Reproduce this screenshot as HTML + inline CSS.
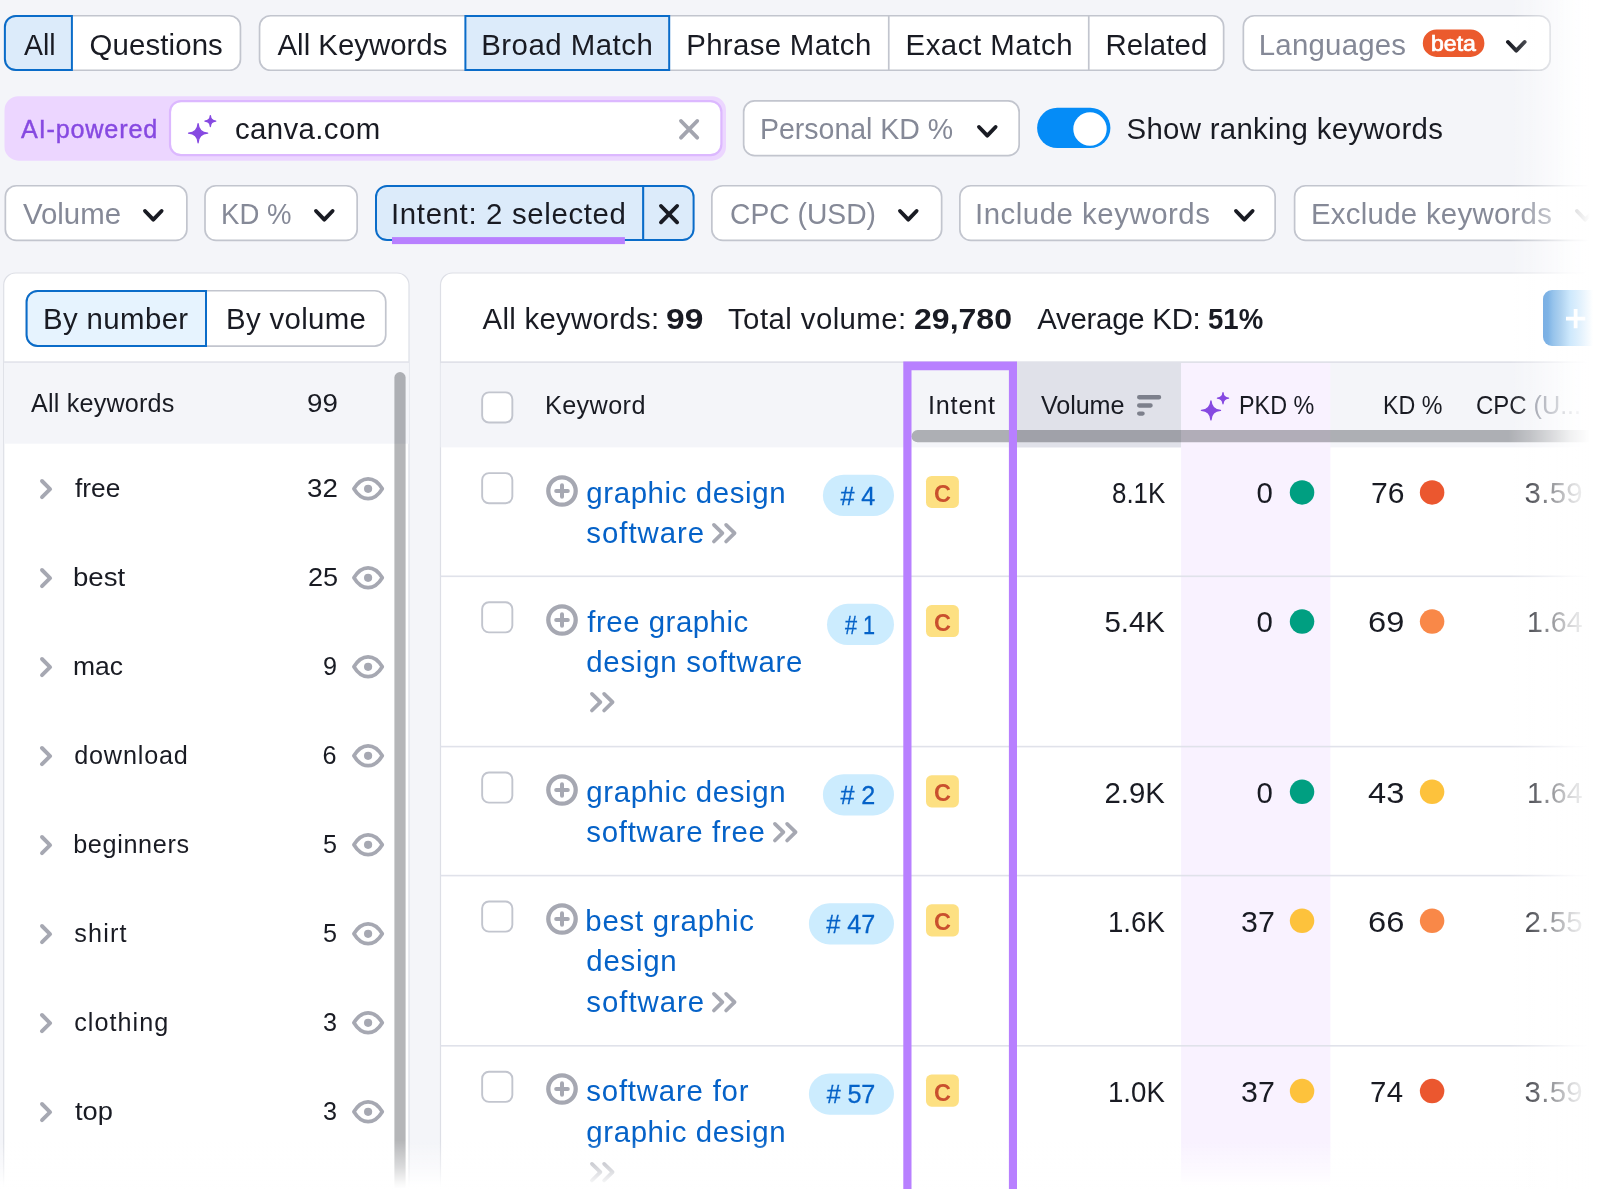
<!DOCTYPE html>
<html lang="en">
<head>
<meta charset="utf-8">
<title>Keyword Magic Tool</title>
<style>
*{box-sizing:border-box;margin:0;padding:0}
html,body{width:1600px;height:1189px;overflow:hidden;background:#f4f5f9}
body{position:relative;font-family:"Liberation Sans",sans-serif;color:#191b23}
.abs{position:absolute}
.t{position:absolute;white-space:pre;line-height:1}
svg{position:absolute;overflow:visible}
</style>
</head>
<body>

<svg style="left:0;top:0" width="1600" height="1189" viewBox="0 0 1600 1189"><path d="M15.70 273.00 H397.00 A12.00 12.00 0 0 1 409.00 285.00 V1299.40 H3.70 V285.00 A12.00 12.00 0 0 1 15.70 273.00 Z" fill="#fff" stroke="#dddfe6" stroke-width="1.2"/><path d="M452.50 273.00 H1699.40 V1299.40 H440.50 V285.00 A12.00 12.00 0 0 1 452.50 273.00 Z" fill="#fff" stroke="#dddfe6" stroke-width="1.2"/><path d="M15.75 15.75 H229.45 A11.00 11.00 0 0 1 240.45 26.75 V59.25 A11.00 11.00 0 0 1 229.45 70.25 H15.75 A11.00 11.00 0 0 1 4.75 59.25 V26.75 A11.00 11.00 0 0 1 15.75 15.75 Z" fill="#fff" stroke="#c2c5ce" stroke-width="1.7"/><path d="M15.90 15.90 H71.90 V70.10 H15.90 A11.00 11.00 0 0 1 4.90 59.10 V26.90 A11.00 11.00 0 0 1 15.90 15.90 Z" fill="#dcebfa" stroke="#0a6cc9" stroke-width="2"/><path d="M270.55 15.75 H1212.65 A11.00 11.00 0 0 1 1223.65 26.75 V59.25 A11.00 11.00 0 0 1 1212.65 70.25 H270.55 A11.00 11.00 0 0 1 259.55 59.25 V26.75 A11.00 11.00 0 0 1 270.55 15.75 Z" fill="#fff" stroke="#c2c5ce" stroke-width="1.7"/><path d="M465.40 15.90 H669.20 V70.10 H465.40 V15.90 Z" fill="#dcebfa" stroke="#0a6cc9" stroke-width="2"/><path d="M888.75 15.9 V70.1" stroke="#c2c5ce" stroke-width="1.7" fill="none"/><path d="M1088.75 15.9 V70.1" stroke="#c2c5ce" stroke-width="1.7" fill="none"/><path d="M1254.35 15.75 H1539.15 A11.00 11.00 0 0 1 1550.15 26.75 V59.25 A11.00 11.00 0 0 1 1539.15 70.25 H1254.35 A11.00 11.00 0 0 1 1243.35 59.25 V26.75 A11.00 11.00 0 0 1 1254.35 15.75 Z" fill="#fff" stroke="#c2c5ce" stroke-width="1.7"/><path d="M1436.55 29.40 H1470.65 A13.75 13.75 0 0 1 1484.40 43.15 V43.15 A13.75 13.75 0 0 1 1470.65 56.90 H1436.55 A13.75 13.75 0 0 1 1422.80 43.15 V43.15 A13.75 13.75 0 0 1 1436.55 29.40 Z" fill="#eb5a2d"/><path d="M18.50 96.20 H712.00 A14.00 14.00 0 0 1 726.00 110.20 V146.70 A14.00 14.00 0 0 1 712.00 160.70 H18.50 A14.00 14.00 0 0 1 4.50 146.70 V110.20 A14.00 14.00 0 0 1 18.50 96.20 Z" fill="#ecd6ff"/><path d="M181.00 101.10 H710.40 A11.00 11.00 0 0 1 721.40 112.10 V144.20 A11.00 11.00 0 0 1 710.40 155.20 H181.00 A11.00 11.00 0 0 1 170.00 144.20 V112.10 A11.00 11.00 0 0 1 181.00 101.10 Z" fill="#fff" stroke="#dcb8ff" stroke-width="2.2"/><path d="M754.65 100.95 H1008.15 A11.00 11.00 0 0 1 1019.15 111.95 V144.65 A11.00 11.00 0 0 1 1008.15 155.65 H754.65 A11.00 11.00 0 0 1 743.65 144.65 V111.95 A11.00 11.00 0 0 1 754.65 100.95 Z" fill="#fff" stroke="#c2c5ce" stroke-width="1.7"/><path d="M1057.27 107.75 H1090.23 A20.17 20.17 0 0 1 1110.40 127.92 V127.93 A20.17 20.17 0 0 1 1090.23 148.10 H1057.27 A20.17 20.17 0 0 1 1037.10 127.93 V127.92 A20.17 20.17 0 0 1 1057.27 107.75 Z" fill="#058cf7"/><circle cx="1090" cy="129" r="16.700" fill="#fff"/><path d="M16.35 185.75 H175.85 A11.00 11.00 0 0 1 186.85 196.75 V229.45 A11.00 11.00 0 0 1 175.85 240.45 H16.35 A11.00 11.00 0 0 1 5.35 229.45 V196.75 A11.00 11.00 0 0 1 16.35 185.75 Z" fill="#fff" stroke="#c2c5ce" stroke-width="1.7"/><path d="M216.00 185.75 H346.15 A11.00 11.00 0 0 1 357.15 196.75 V229.45 A11.00 11.00 0 0 1 346.15 240.45 H216.00 A11.00 11.00 0 0 1 205.00 229.45 V196.75 A11.00 11.00 0 0 1 216.00 185.75 Z" fill="#fff" stroke="#c2c5ce" stroke-width="1.7"/><path d="M387.00 185.90 H682.60 A11.00 11.00 0 0 1 693.60 196.90 V229.10 A11.00 11.00 0 0 1 682.60 240.10 H387.00 A11.00 11.00 0 0 1 376.00 229.10 V196.90 A11.00 11.00 0 0 1 387.00 185.90 Z" fill="#dcebfa" stroke="#0a6cc9" stroke-width="2"/><path d="M643.15 185.9 V240.3" stroke="#0a6cc9" stroke-width="2.1" fill="none"/><rect x="392" y="237.100" width="232.900" height="7" fill="#b880ff"/><path d="M722.85 185.75 H930.65 A11.00 11.00 0 0 1 941.65 196.75 V229.45 A11.00 11.00 0 0 1 930.65 240.45 H722.85 A11.00 11.00 0 0 1 711.85 229.45 V196.75 A11.00 11.00 0 0 1 722.85 185.75 Z" fill="#fff" stroke="#c2c5ce" stroke-width="1.7"/><path d="M970.85 185.75 H1264.15 A11.00 11.00 0 0 1 1275.15 196.75 V229.45 A11.00 11.00 0 0 1 1264.15 240.45 H970.85 A11.00 11.00 0 0 1 959.85 229.45 V196.75 A11.00 11.00 0 0 1 970.85 185.75 Z" fill="#fff" stroke="#c2c5ce" stroke-width="1.7"/><path d="M1305.60 185.75 H1648.15 A11.00 11.00 0 0 1 1659.15 196.75 V229.45 A11.00 11.00 0 0 1 1648.15 240.45 H1305.60 A11.00 11.00 0 0 1 1294.60 229.45 V196.75 A11.00 11.00 0 0 1 1305.60 185.75 Z" fill="#fff" stroke="#c2c5ce" stroke-width="1.7"/><rect x="4.100" y="361.300" width="404.800" height="1.600" fill="#e0e1e9"/><rect x="4.100" y="362.900" width="404.800" height="80.800" fill="#f4f5f9"/><path d="M37.45 290.75 H374.75 A11.00 11.00 0 0 1 385.75 301.75 V335.05 A11.00 11.00 0 0 1 374.75 346.05 H37.45 A11.00 11.00 0 0 1 26.45 335.05 V301.75 A11.00 11.00 0 0 1 37.45 290.75 Z" fill="#fff" stroke="#c2c5ce" stroke-width="1.7"/><path d="M37.60 290.90 H206.00 V345.90 H37.60 A11.00 11.00 0 0 1 26.60 334.90 V301.90 A11.00 11.00 0 0 1 37.60 290.90 Z" fill="#e6f3fe" stroke="#0a6cc9" stroke-width="2"/><rect x="394.400" y="372" width="11.200" height="900" rx="5.600" fill="rgba(25,27,35,0.32)"/></svg>
<svg style="left:1506.2px;top:39.6px" width="20.600" height="12.750" viewBox="0 0 20.600 12.750"><path d="M2 2 L10.300 10.600 L18.600 2" fill="none" stroke="#191b23" stroke-width="3.900" stroke-linecap="round" stroke-linejoin="round"/></svg>
<svg style="left:187.95px;top:114.7px" width="28.500" height="28.500" viewBox="0 0 28.500 28.500"><path d="M10.10 8.65 Q10.67 17.63 19.65 18.20 Q10.67 18.77 10.10 27.75 Q9.53 18.77 0.55 18.20 Q9.53 17.63 10.10 8.65 Z" fill="#8649e1" stroke="#8649e1" stroke-width="1.300" stroke-linejoin="round"/><path d="M22.35 0.60 Q22.68 5.72 27.80 6.05 Q22.68 6.38 22.35 11.50 Q22.02 6.38 16.90 6.05 Q22.02 5.72 22.35 0.60 Z" fill="#8649e1" stroke="#8649e1" stroke-width="1.300" stroke-linejoin="round"/></svg>
<svg style="left:679.400px;top:118.600px" width="20.200" height="20.600" viewBox="0 0 20.200 20.600"><path d="M2 2 L18.200 18.600 M18.200 2 L2 18.600" fill="none" stroke="#a3a5af" stroke-width="3.900" stroke-linecap="round"/></svg>
<svg style="left:976.8px;top:124.6px" width="20.600" height="12.750" viewBox="0 0 20.600 12.750"><path d="M2 2 L10.300 10.600 L18.600 2" fill="none" stroke="#191b23" stroke-width="3.900" stroke-linecap="round" stroke-linejoin="round"/></svg>
<svg style="left:143.4px;top:209.25px" width="20.600" height="12.750" viewBox="0 0 20.600 12.750"><path d="M2 2 L10.300 10.600 L18.600 2" fill="none" stroke="#191b23" stroke-width="3.900" stroke-linecap="round" stroke-linejoin="round"/></svg>
<svg style="left:313.6px;top:209.25px" width="20.600" height="12.750" viewBox="0 0 20.600 12.750"><path d="M2 2 L10.300 10.600 L18.600 2" fill="none" stroke="#191b23" stroke-width="3.900" stroke-linecap="round" stroke-linejoin="round"/></svg>
<svg style="left:659.200px;top:203.600px" width="20.100" height="20.300" viewBox="0 0 20.100 20.300"><path d="M2 2 L18.100 18.300 M18.100 2 L2 18.300" fill="none" stroke="#191b23" stroke-width="3.900" stroke-linecap="round"/></svg>
<svg style="left:897.8px;top:209.25px" width="20.600" height="12.750" viewBox="0 0 20.600 12.750"><path d="M2 2 L10.300 10.600 L18.600 2" fill="none" stroke="#191b23" stroke-width="3.900" stroke-linecap="round" stroke-linejoin="round"/></svg>
<svg style="left:1233.6px;top:209.25px" width="20.600" height="12.750" viewBox="0 0 20.600 12.750"><path d="M2 2 L10.300 10.600 L18.600 2" fill="none" stroke="#191b23" stroke-width="3.900" stroke-linecap="round" stroke-linejoin="round"/></svg>
<svg style="left:1575px;top:209.25px" width="20.600" height="12.750" viewBox="0 0 20.600 12.750"><path d="M2 2 L10.300 10.600 L18.600 2" fill="none" stroke="#191b23" stroke-width="3.900" stroke-linecap="round" stroke-linejoin="round"/></svg>
<svg style="left:40.250px;top:478.75px" width="12.200" height="20.200" viewBox="0 0 12.200 20.200"><path d="M2 2 L10.100 10.100 L2 18.200" fill="none" stroke="#a6a8b2" stroke-width="3.900" stroke-linecap="round" stroke-linejoin="round"/></svg>
<svg style="left:351.900px;top:476.9px" width="32.200" height="23.600" viewBox="0 0 32.200 23.600"><path d="M1.900 11.800 C6 5 10.500 1.900 16.100 1.900 C21.700 1.900 26.200 5 30.300 11.800 C26.200 18.600 21.700 21.700 16.100 21.700 C10.500 21.700 6 18.600 1.900 11.800 Z" fill="none" stroke="#a6a8b2" stroke-width="3.700" stroke-linejoin="round"/><circle cx="16.100" cy="11.800" r="4.100" fill="#a6a8b2"/></svg>
<svg style="left:40.250px;top:567.75px" width="12.200" height="20.200" viewBox="0 0 12.200 20.200"><path d="M2 2 L10.100 10.100 L2 18.200" fill="none" stroke="#a6a8b2" stroke-width="3.900" stroke-linecap="round" stroke-linejoin="round"/></svg>
<svg style="left:351.900px;top:565.9px" width="32.200" height="23.600" viewBox="0 0 32.200 23.600"><path d="M1.900 11.800 C6 5 10.500 1.900 16.100 1.900 C21.700 1.900 26.200 5 30.300 11.800 C26.200 18.600 21.700 21.700 16.100 21.700 C10.500 21.700 6 18.600 1.900 11.800 Z" fill="none" stroke="#a6a8b2" stroke-width="3.700" stroke-linejoin="round"/><circle cx="16.100" cy="11.800" r="4.100" fill="#a6a8b2"/></svg>
<svg style="left:40.250px;top:656.75px" width="12.200" height="20.200" viewBox="0 0 12.200 20.200"><path d="M2 2 L10.100 10.100 L2 18.200" fill="none" stroke="#a6a8b2" stroke-width="3.900" stroke-linecap="round" stroke-linejoin="round"/></svg>
<svg style="left:351.900px;top:654.9px" width="32.200" height="23.600" viewBox="0 0 32.200 23.600"><path d="M1.900 11.800 C6 5 10.500 1.900 16.100 1.900 C21.700 1.900 26.200 5 30.300 11.800 C26.200 18.600 21.700 21.700 16.100 21.700 C10.500 21.700 6 18.600 1.900 11.800 Z" fill="none" stroke="#a6a8b2" stroke-width="3.700" stroke-linejoin="round"/><circle cx="16.100" cy="11.800" r="4.100" fill="#a6a8b2"/></svg>
<svg style="left:40.250px;top:745.75px" width="12.200" height="20.200" viewBox="0 0 12.200 20.200"><path d="M2 2 L10.100 10.100 L2 18.200" fill="none" stroke="#a6a8b2" stroke-width="3.900" stroke-linecap="round" stroke-linejoin="round"/></svg>
<svg style="left:351.900px;top:743.9px" width="32.200" height="23.600" viewBox="0 0 32.200 23.600"><path d="M1.900 11.800 C6 5 10.500 1.900 16.100 1.900 C21.700 1.900 26.200 5 30.300 11.800 C26.200 18.600 21.700 21.700 16.100 21.700 C10.500 21.700 6 18.600 1.900 11.800 Z" fill="none" stroke="#a6a8b2" stroke-width="3.700" stroke-linejoin="round"/><circle cx="16.100" cy="11.800" r="4.100" fill="#a6a8b2"/></svg>
<svg style="left:40.250px;top:834.75px" width="12.200" height="20.200" viewBox="0 0 12.200 20.200"><path d="M2 2 L10.100 10.100 L2 18.200" fill="none" stroke="#a6a8b2" stroke-width="3.900" stroke-linecap="round" stroke-linejoin="round"/></svg>
<svg style="left:351.900px;top:832.9px" width="32.200" height="23.600" viewBox="0 0 32.200 23.600"><path d="M1.900 11.800 C6 5 10.500 1.900 16.100 1.900 C21.700 1.900 26.200 5 30.300 11.800 C26.200 18.600 21.700 21.700 16.100 21.700 C10.500 21.700 6 18.600 1.900 11.800 Z" fill="none" stroke="#a6a8b2" stroke-width="3.700" stroke-linejoin="round"/><circle cx="16.100" cy="11.800" r="4.100" fill="#a6a8b2"/></svg>
<svg style="left:40.250px;top:923.75px" width="12.200" height="20.200" viewBox="0 0 12.200 20.200"><path d="M2 2 L10.100 10.100 L2 18.200" fill="none" stroke="#a6a8b2" stroke-width="3.900" stroke-linecap="round" stroke-linejoin="round"/></svg>
<svg style="left:351.900px;top:921.9px" width="32.200" height="23.600" viewBox="0 0 32.200 23.600"><path d="M1.900 11.800 C6 5 10.500 1.900 16.100 1.900 C21.700 1.900 26.200 5 30.300 11.800 C26.200 18.600 21.700 21.700 16.100 21.700 C10.500 21.700 6 18.600 1.900 11.800 Z" fill="none" stroke="#a6a8b2" stroke-width="3.700" stroke-linejoin="round"/><circle cx="16.100" cy="11.800" r="4.100" fill="#a6a8b2"/></svg>
<svg style="left:40.250px;top:1012.75px" width="12.200" height="20.200" viewBox="0 0 12.200 20.200"><path d="M2 2 L10.100 10.100 L2 18.200" fill="none" stroke="#a6a8b2" stroke-width="3.900" stroke-linecap="round" stroke-linejoin="round"/></svg>
<svg style="left:351.900px;top:1010.9px" width="32.200" height="23.600" viewBox="0 0 32.200 23.600"><path d="M1.900 11.800 C6 5 10.500 1.900 16.100 1.900 C21.700 1.900 26.200 5 30.300 11.800 C26.200 18.600 21.700 21.700 16.100 21.700 C10.500 21.700 6 18.600 1.900 11.800 Z" fill="none" stroke="#a6a8b2" stroke-width="3.700" stroke-linejoin="round"/><circle cx="16.100" cy="11.800" r="4.100" fill="#a6a8b2"/></svg>
<svg style="left:40.250px;top:1101.75px" width="12.200" height="20.200" viewBox="0 0 12.200 20.200"><path d="M2 2 L10.100 10.100 L2 18.200" fill="none" stroke="#a6a8b2" stroke-width="3.900" stroke-linecap="round" stroke-linejoin="round"/></svg>
<svg style="left:351.900px;top:1099.9px" width="32.200" height="23.600" viewBox="0 0 32.200 23.600"><path d="M1.900 11.800 C6 5 10.500 1.900 16.100 1.900 C21.700 1.900 26.200 5 30.300 11.800 C26.200 18.600 21.700 21.700 16.100 21.700 C10.500 21.700 6 18.600 1.900 11.800 Z" fill="none" stroke="#a6a8b2" stroke-width="3.700" stroke-linejoin="round"/><circle cx="16.100" cy="11.800" r="4.100" fill="#a6a8b2"/></svg>
<svg style="left:0;top:0" width="1600" height="1189" viewBox="0 0 1600 1189"><rect x="440.600" y="363" width="1160" height="84.400" fill="#f4f5f9"/><rect x="1017" y="363" width="164.100" height="84.400" fill="#e0e1e9"/><rect x="1181.100" y="363" width="149.300" height="840" fill="#f9f2ff"/><rect x="440.600" y="361.300" width="1160" height="1.700" fill="#e0e1e9"/><rect x="440.600" y="575.5" width="1160" height="1.600" fill="#e0e2ea"/><rect x="440.600" y="745.8" width="1160" height="1.600" fill="#e0e2ea"/><rect x="440.600" y="874.8" width="1160" height="1.600" fill="#e0e2ea"/><rect x="440.600" y="1045.0" width="1160" height="1.600" fill="#e0e2ea"/><rect x="911.500" y="430.100" width="720" height="12.200" rx="6.100" fill="rgba(25,27,35,0.32)"/></svg>
<svg style="left:1136.650px;top:395.400px" width="24.300" height="20.800" viewBox="0 0 24.300 20.800"><path d="M2.150 2.250 H22.100 M2.150 10.500 H13.600 M2.150 18.550 H5.600" stroke="#7d808c" stroke-width="4.300" stroke-linecap="round" fill="none"/></svg>
<svg style="left:1201.4px;top:391.6px" width="28.500" height="28.500" viewBox="0 0 28.500 28.500"><path d="M9.95 8.85 Q10.52 17.83 19.50 18.40 Q10.52 18.97 9.95 27.95 Q9.38 18.97 0.40 18.40 Q9.38 17.83 9.95 8.85 Z" fill="#8649e1" stroke="#8649e1" stroke-width="1.300" stroke-linejoin="round"/><path d="M22.00 0.65 Q22.33 5.87 27.55 6.20 Q22.33 6.53 22.00 11.75 Q21.67 6.53 16.45 6.20 Q21.67 5.87 22.00 0.65 Z" fill="#8649e1" stroke="#8649e1" stroke-width="1.300" stroke-linejoin="round"/></svg>
<svg style="left:546px;top:474.5px" width="32" height="32" viewBox="0 0 32 32"><circle cx="16" cy="16" r="13.700" fill="none" stroke="#a6a8b2" stroke-width="4.300"/><path d="M16 10.200 V21.800 M10.200 16 H21.800" stroke="#a6a8b2" stroke-width="4" stroke-linecap="round" fill="none"/></svg>
<svg style="left:711.75px;top:522.8px" width="24.500" height="20.400" viewBox="0 0 24.500 20.400"><path d="M1.900 1.900 L10.400 10.200 L1.900 18.500 M14.100 1.900 L22.600 10.200 L14.100 18.500" fill="none" stroke="#a6a8b2" stroke-width="3.700" stroke-linecap="round" stroke-linejoin="round"/></svg>
<svg style="left:546px;top:603.6px" width="32" height="32" viewBox="0 0 32 32"><circle cx="16" cy="16" r="13.700" fill="none" stroke="#a6a8b2" stroke-width="4.300"/><path d="M16 10.200 V21.800 M10.200 16 H21.800" stroke="#a6a8b2" stroke-width="4" stroke-linecap="round" fill="none"/></svg>
<svg style="left:590.3px;top:692.3px" width="24.500" height="20.400" viewBox="0 0 24.500 20.400"><path d="M1.900 1.900 L10.400 10.200 L1.900 18.500 M14.100 1.900 L22.600 10.200 L14.100 18.500" fill="none" stroke="#a6a8b2" stroke-width="3.700" stroke-linecap="round" stroke-linejoin="round"/></svg>
<svg style="left:546px;top:773.9px" width="32" height="32" viewBox="0 0 32 32"><circle cx="16" cy="16" r="13.700" fill="none" stroke="#a6a8b2" stroke-width="4.300"/><path d="M16 10.200 V21.800 M10.200 16 H21.800" stroke="#a6a8b2" stroke-width="4" stroke-linecap="round" fill="none"/></svg>
<svg style="left:772.5px;top:822.1999999999999px" width="24.500" height="20.400" viewBox="0 0 24.500 20.400"><path d="M1.900 1.900 L10.400 10.200 L1.900 18.500 M14.100 1.900 L22.600 10.200 L14.100 18.500" fill="none" stroke="#a6a8b2" stroke-width="3.700" stroke-linecap="round" stroke-linejoin="round"/></svg>
<svg style="left:546px;top:902.9px" width="32" height="32" viewBox="0 0 32 32"><circle cx="16" cy="16" r="13.700" fill="none" stroke="#a6a8b2" stroke-width="4.300"/><path d="M16 10.200 V21.800 M10.200 16 H21.800" stroke="#a6a8b2" stroke-width="4" stroke-linecap="round" fill="none"/></svg>
<svg style="left:711.75px;top:991.5999999999999px" width="24.500" height="20.400" viewBox="0 0 24.500 20.400"><path d="M1.900 1.900 L10.400 10.200 L1.900 18.500 M14.100 1.900 L22.600 10.200 L14.100 18.500" fill="none" stroke="#a6a8b2" stroke-width="3.700" stroke-linecap="round" stroke-linejoin="round"/></svg>
<svg style="left:546px;top:1073.15px" width="32" height="32" viewBox="0 0 32 32"><circle cx="16" cy="16" r="13.700" fill="none" stroke="#a6a8b2" stroke-width="4.300"/><path d="M16 10.200 V21.800 M10.200 16 H21.800" stroke="#a6a8b2" stroke-width="4" stroke-linecap="round" fill="none"/></svg>
<svg style="left:590.3px;top:1161.85px" width="24.500" height="20.400" viewBox="0 0 24.500 20.400"><path d="M1.900 1.900 L10.400 10.200 L1.900 18.500 M14.100 1.900 L22.600 10.200 L14.100 18.500" fill="none" stroke="#a6a8b2" stroke-width="3.700" stroke-linecap="round" stroke-linejoin="round"/></svg>
<svg style="left:0;top:0" width="1600" height="1189" viewBox="0 0 1600 1189"><path d="M488.95 392.35 H505.55 A6.80 6.80 0 0 1 512.35 399.15 V415.65 A6.80 6.80 0 0 1 505.55 422.45 H488.95 A6.80 6.80 0 0 1 482.15 415.65 V399.15 A6.80 6.80 0 0 1 488.95 392.35 Z" fill="#fff" stroke="#c2c5ce" stroke-width="1.9"/><path d="M488.95 473.15 H505.55 A6.80 6.80 0 0 1 512.35 479.95 V496.45 A6.80 6.80 0 0 1 505.55 503.25 H488.95 A6.80 6.80 0 0 1 482.15 496.45 V479.95 A6.80 6.80 0 0 1 488.95 473.15 Z" fill="#fff" stroke="#c2c5ce" stroke-width="1.9"/><path d="M843.50 474.75 H873.40 A20.60 20.60 0 0 1 894.00 495.35 V495.40 A20.60 20.60 0 0 1 873.40 516.00 H843.50 A20.60 20.60 0 0 1 822.90 495.40 V495.35 A20.60 20.60 0 0 1 843.50 474.75 Z" fill="#ccecfe"/><path d="M931.60 475.90 H953.30 A5.60 5.60 0 0 1 958.90 481.50 V502.40 A5.60 5.60 0 0 1 953.30 508.00 H931.60 A5.60 5.60 0 0 1 926.00 502.40 V481.50 A5.60 5.60 0 0 1 931.60 475.90 Z" fill="#fde082"/><circle cx="1302.050" cy="492.45" r="12.250" fill="#009f81"/><circle cx="1432.100" cy="492.45" r="12.250" fill="#eb572f"/><path d="M488.95 602.25 H505.55 A6.80 6.80 0 0 1 512.35 609.05 V625.55 A6.80 6.80 0 0 1 505.55 632.35 H488.95 A6.80 6.80 0 0 1 482.15 625.55 V609.05 A6.80 6.80 0 0 1 488.95 602.25 Z" fill="#fff" stroke="#c2c5ce" stroke-width="1.9"/><path d="M847.60 603.85 H873.40 A20.60 20.60 0 0 1 894.00 624.45 V624.50 A20.60 20.60 0 0 1 873.40 645.10 H847.60 A20.60 20.60 0 0 1 827.00 624.50 V624.45 A20.60 20.60 0 0 1 847.60 603.85 Z" fill="#ccecfe"/><path d="M931.60 605.00 H953.30 A5.60 5.60 0 0 1 958.90 610.60 V631.50 A5.60 5.60 0 0 1 953.30 637.10 H931.60 A5.60 5.60 0 0 1 926.00 631.50 V610.60 A5.60 5.60 0 0 1 931.60 605.00 Z" fill="#fde082"/><circle cx="1302.050" cy="621.55" r="12.250" fill="#009f81"/><circle cx="1432.100" cy="621.55" r="12.250" fill="#f98848"/><path d="M488.95 772.55 H505.55 A6.80 6.80 0 0 1 512.35 779.35 V795.85 A6.80 6.80 0 0 1 505.55 802.65 H488.95 A6.80 6.80 0 0 1 482.15 795.85 V779.35 A6.80 6.80 0 0 1 488.95 772.55 Z" fill="#fff" stroke="#c2c5ce" stroke-width="1.9"/><path d="M843.50 774.15 H873.40 A20.60 20.60 0 0 1 894.00 794.75 V794.80 A20.60 20.60 0 0 1 873.40 815.40 H843.50 A20.60 20.60 0 0 1 822.90 794.80 V794.75 A20.60 20.60 0 0 1 843.50 774.15 Z" fill="#ccecfe"/><path d="M931.60 775.30 H953.30 A5.60 5.60 0 0 1 958.90 780.90 V801.80 A5.60 5.60 0 0 1 953.30 807.40 H931.60 A5.60 5.60 0 0 1 926.00 801.80 V780.90 A5.60 5.60 0 0 1 931.60 775.30 Z" fill="#fde082"/><circle cx="1302.050" cy="791.85" r="12.250" fill="#009f81"/><circle cx="1432.100" cy="791.85" r="12.250" fill="#fdc23c"/><path d="M488.95 901.55 H505.55 A6.80 6.80 0 0 1 512.35 908.35 V924.85 A6.80 6.80 0 0 1 505.55 931.65 H488.95 A6.80 6.80 0 0 1 482.15 924.85 V908.35 A6.80 6.80 0 0 1 488.95 901.55 Z" fill="#fff" stroke="#c2c5ce" stroke-width="1.9"/><path d="M829.50 903.15 H873.40 A20.60 20.60 0 0 1 894.00 923.75 V923.80 A20.60 20.60 0 0 1 873.40 944.40 H829.50 A20.60 20.60 0 0 1 808.90 923.80 V923.75 A20.60 20.60 0 0 1 829.50 903.15 Z" fill="#ccecfe"/><path d="M931.60 904.30 H953.30 A5.60 5.60 0 0 1 958.90 909.90 V930.80 A5.60 5.60 0 0 1 953.30 936.40 H931.60 A5.60 5.60 0 0 1 926.00 930.80 V909.90 A5.60 5.60 0 0 1 931.60 904.30 Z" fill="#fde082"/><circle cx="1302.050" cy="920.85" r="12.250" fill="#fdc23c"/><circle cx="1432.100" cy="920.85" r="12.250" fill="#f98848"/><path d="M488.95 1071.80 H505.55 A6.80 6.80 0 0 1 512.35 1078.60 V1095.10 A6.80 6.80 0 0 1 505.55 1101.90 H488.95 A6.80 6.80 0 0 1 482.15 1095.10 V1078.60 A6.80 6.80 0 0 1 488.95 1071.80 Z" fill="#fff" stroke="#c2c5ce" stroke-width="1.9"/><path d="M829.50 1073.40 H873.40 A20.60 20.60 0 0 1 894.00 1094.00 V1094.05 A20.60 20.60 0 0 1 873.40 1114.65 H829.50 A20.60 20.60 0 0 1 808.90 1094.05 V1094.00 A20.60 20.60 0 0 1 829.50 1073.40 Z" fill="#ccecfe"/><path d="M931.60 1074.55 H953.30 A5.60 5.60 0 0 1 958.90 1080.15 V1101.05 A5.60 5.60 0 0 1 953.30 1106.65 H931.60 A5.60 5.60 0 0 1 926.00 1101.05 V1080.15 A5.60 5.60 0 0 1 931.60 1074.55 Z" fill="#fde082"/><circle cx="1302.050" cy="1091.10" r="12.250" fill="#fdc23c"/><circle cx="1432.100" cy="1091.10" r="12.250" fill="#eb572f"/></svg>
<div id="textwrap" style="position:absolute;left:0;top:0;width:1600px;height:1189px;will-change:transform">
<div class="t" style="left:23.8px;top:30px;font-size:29.4px;color:#191b23;transform:scaleX(0.9677);transform-origin:0 0;">All</div>
<div class="t" style="left:89.5px;top:30px;font-size:29.4px;color:#191b23;letter-spacing:0.12px;">Questions</div>
<div class="t" style="left:277.5px;top:30px;font-size:29.4px;color:#191b23;">All Keywords</div>
<div class="t" style="left:481.2px;top:30px;font-size:29.4px;color:#191b23;letter-spacing:0.50px;">Broad Match</div>
<div class="t" style="left:686.2px;top:30px;font-size:29.4px;color:#191b23;letter-spacing:0.34px;">Phrase Match</div>
<div class="t" style="left:905.5px;top:30px;font-size:29.4px;color:#191b23;letter-spacing:0.53px;">Exact Match</div>
<div class="t" style="left:1105.5px;top:30px;font-size:29.4px;color:#191b23;letter-spacing:0.08px;">Related</div>
<div class="t" style="left:1258.8px;top:30px;font-size:29.4px;color:#858997;letter-spacing:0.22px;">Languages</div>
<div class="t" style="left:1430.8px;top:34px;font-size:21.5px;color:#fff;transform:scaleX(1.0732);transform-origin:0 0;-webkit-text-stroke:0.7px #fff;">beta</div>
<div class="t" style="left:21.0px;top:117px;font-size:25.2px;color:#8649e1;letter-spacing:0.83px;-webkit-text-stroke:0.4px #8649e1;">AI-powered</div>
<div class="t" style="left:235.0px;top:114px;font-size:29.4px;color:#191b23;letter-spacing:0.38px;">canva.com</div>
<div class="t" style="left:760.1px;top:114px;font-size:29.4px;color:#858997;transform:scaleX(0.9694);transform-origin:0 0;">Personal KD %</div>
<div class="t" style="left:1126.5px;top:114px;font-size:29.4px;color:#191b23;letter-spacing:0.30px;">Show ranking keywords</div>
<div class="t" style="left:23.0px;top:199px;font-size:29.4px;color:#858997;">Volume</div>
<div class="t" style="left:221.1px;top:199px;font-size:29.4px;color:#858997;transform:scaleX(0.9375);transform-origin:0 0;">KD %</div>
<div class="t" style="left:391.0px;top:199px;font-size:29.4px;color:#191b23;letter-spacing:0.65px;">Intent: 2 selected</div>
<div class="t" style="left:729.5px;top:199px;font-size:29.4px;color:#858997;transform:scaleX(0.9614);transform-origin:0 0;">CPC (USD)</div>
<div class="t" style="left:975.0px;top:199px;font-size:29.4px;color:#858997;letter-spacing:0.52px;">Include keywords</div>
<div class="t" style="left:1311.0px;top:199px;font-size:29.4px;color:#858997;letter-spacing:0.27px;">Exclude keywords</div>
<div class="t" style="left:43.0px;top:304px;font-size:29.4px;color:#191b23;letter-spacing:0.38px;">By number</div>
<div class="t" style="left:226.0px;top:304px;font-size:29.4px;color:#191b23;letter-spacing:0.34px;">By volume</div>
<div class="t" style="left:31.0px;top:391px;font-size:25.2px;color:#191b23;letter-spacing:0.18px;">All keywords</div>
<div class="t" style="left:307.3px;top:391px;font-size:25.2px;color:#191b23;transform:scaleX(1.1000);transform-origin:0 0;">99</div>
<div class="t" style="left:75.2px;top:476px;font-size:25.2px;color:#191b23;transform:scaleX(1.0419);transform-origin:0 0;">free</div>
<div class="t" style="left:307.3px;top:476px;font-size:25.2px;color:#191b23;transform:scaleX(1.1000);transform-origin:0 0;">32</div>
<div class="t" style="left:73.0px;top:565px;font-size:25.2px;color:#191b23;transform:scaleX(1.0956);transform-origin:0 0;">best</div>
<div class="t" style="left:307.9px;top:565px;font-size:25.2px;color:#191b23;transform:scaleX(1.0769);transform-origin:0 0;">25</div>
<div class="t" style="left:73.1px;top:654px;font-size:25.2px;color:#191b23;transform:scaleX(1.0511);transform-origin:0 0;">mac</div>
<div class="t" style="left:323.0px;top:654px;font-size:25.2px;color:#191b23;">9</div>
<div class="t" style="left:74.2px;top:743px;font-size:25.2px;color:#191b23;letter-spacing:0.83px;">download</div>
<div class="t" style="left:322.5px;top:743px;font-size:25.2px;color:#191b23;">6</div>
<div class="t" style="left:73.2px;top:832px;font-size:25.2px;color:#191b23;letter-spacing:0.66px;">beginners</div>
<div class="t" style="left:323.0px;top:832px;font-size:25.2px;color:#191b23;">5</div>
<div class="t" style="left:74.2px;top:921px;font-size:25.2px;color:#191b23;letter-spacing:1.20px;">shirt</div>
<div class="t" style="left:323.0px;top:921px;font-size:25.2px;color:#191b23;">5</div>
<div class="t" style="left:74.2px;top:1010px;font-size:25.2px;color:#191b23;letter-spacing:1.04px;">clothing</div>
<div class="t" style="left:323.0px;top:1010px;font-size:25.2px;color:#191b23;">3</div>
<div class="t" style="left:75.2px;top:1099px;font-size:25.2px;color:#191b23;transform:scaleX(1.0824);transform-origin:0 0;">top</div>
<div class="t" style="left:323.0px;top:1099px;font-size:25.2px;color:#191b23;">3</div>
<div class="t" style="left:482.5px;top:304px;font-size:29.4px;color:#191b23;letter-spacing:0.29px;">All keywords:</div>
<div class="t" style="left:665.9px;top:304px;font-size:29.4px;color:#191b23;font-weight:bold;transform:scaleX(1.1419);transform-origin:0 0;">99</div>
<div class="t" style="left:728.0px;top:304px;font-size:29.4px;color:#191b23;letter-spacing:0.42px;">Total volume:</div>
<div class="t" style="left:913.7px;top:304px;font-size:29.4px;color:#191b23;font-weight:bold;transform:scaleX(1.0898);transform-origin:0 0;">29,780</div>
<div class="t" style="left:1037.2px;top:304px;font-size:29.4px;color:#191b23;letter-spacing:-0.25px;">Average KD:</div>
<div class="t" style="left:1207.9px;top:304px;font-size:29.4px;color:#191b23;font-weight:bold;transform:scaleX(0.9386);transform-origin:0 0;">51%</div>
<div class="t" style="left:545.0px;top:393px;font-size:25.2px;color:#191b23;letter-spacing:0.40px;">Keyword</div>
<div class="t" style="left:928.0px;top:393px;font-size:25.2px;color:#191b23;letter-spacing:0.80px;">Intent</div>
<div class="t" style="left:1041.0px;top:393px;font-size:25.2px;color:#191b23;letter-spacing:-0.10px;">Volume</div>
<div class="t" style="left:1238.5px;top:393px;font-size:25.2px;color:#191b23;transform:scaleX(0.9282);transform-origin:0 0;">PKD %</div>
<div class="t" style="left:1383.2px;top:393px;font-size:25.2px;color:#191b23;transform:scaleX(0.9242);transform-origin:0 0;">KD %</div>
<div class="t" style="left:1476.0px;top:393px;font-size:25.2px;color:#191b23;transform:scaleX(0.9510);transform-origin:0 0;">CPC</div>
<div class="t" style="left:1533.6px;top:393px;font-size:25.2px;color:#858997;letter-spacing:-0.02px;">(U...</div>
<div class="t" style="left:586.3px;top:478px;font-size:29.4px;color:#0562c8;letter-spacing:0.62px;">graphic design</div>
<div class="t" style="left:586.3px;top:518px;font-size:29.4px;color:#0562c8;letter-spacing:0.96px;">software</div>
<div class="t" style="left:587.3px;top:607px;font-size:29.4px;color:#0562c8;letter-spacing:0.52px;">free graphic</div>
<div class="t" style="left:586.3px;top:647px;font-size:29.4px;color:#0562c8;letter-spacing:0.73px;">design software</div>
<div class="t" style="left:586.3px;top:777px;font-size:29.4px;color:#0562c8;letter-spacing:0.62px;">graphic design</div>
<div class="t" style="left:586.3px;top:817px;font-size:29.4px;color:#0562c8;letter-spacing:0.73px;">software free</div>
<div class="t" style="left:585.3px;top:906px;font-size:29.4px;color:#0562c8;letter-spacing:0.77px;">best graphic</div>
<div class="t" style="left:586.3px;top:946px;font-size:29.4px;color:#0562c8;letter-spacing:0.74px;">design</div>
<div class="t" style="left:586.3px;top:987px;font-size:29.4px;color:#0562c8;letter-spacing:0.96px;">software</div>
<div class="t" style="left:586.3px;top:1076px;font-size:29.4px;color:#0562c8;letter-spacing:0.79px;">software for</div>
<div class="t" style="left:586.3px;top:1117px;font-size:29.4px;color:#0562c8;letter-spacing:0.62px;">graphic design</div>
<div class="t" style="left:840.4px;top:484px;font-size:25.2px;color:#0562c8;letter-spacing:-0.05px;-webkit-text-stroke:0.3px #0562c8;"># 4</div>
<div class="t" style="left:845.0px;top:613px;font-size:25.2px;color:#0562c8;transform:scaleX(0.8618);transform-origin:0 0;-webkit-text-stroke:0.3px #0562c8;"># 1</div>
<div class="t" style="left:840.4px;top:783px;font-size:25.2px;color:#0562c8;letter-spacing:-0.05px;-webkit-text-stroke:0.3px #0562c8;"># 2</div>
<div class="t" style="left:826.3px;top:912px;font-size:25.2px;color:#0562c8;-webkit-text-stroke:0.3px #0562c8;"># 47</div>
<div class="t" style="left:826.8px;top:1082px;font-size:25.2px;color:#0562c8;letter-spacing:-0.17px;-webkit-text-stroke:0.3px #0562c8;"># 57</div>
<div class="t" style="left:933.9px;top:483px;font-size:23.5px;color:#c9502e;font-weight:bold;">C</div>
<div class="t" style="left:933.9px;top:612px;font-size:23.5px;color:#c9502e;font-weight:bold;">C</div>
<div class="t" style="left:933.9px;top:782px;font-size:23.5px;color:#c9502e;font-weight:bold;">C</div>
<div class="t" style="left:933.9px;top:911px;font-size:23.5px;color:#c9502e;font-weight:bold;">C</div>
<div class="t" style="left:933.9px;top:1082px;font-size:23.5px;color:#c9502e;font-weight:bold;">C</div>
<div class="t" style="left:1111.5px;top:478px;font-size:29.4px;color:#191b23;transform:scaleX(0.8814);transform-origin:0 0;">8.1K</div>
<div class="t" style="left:1256.5px;top:478px;font-size:29.4px;color:#191b23;">0</div>
<div class="t" style="left:1370.6px;top:478px;font-size:29.4px;color:#191b23;transform:scaleX(1.0233);transform-origin:0 0;">76</div>
<div class="t" style="left:1524.5px;top:478px;font-size:29.4px;color:#191b23;letter-spacing:0.33px;">3.59</div>
<div class="t" style="left:1104.4px;top:607px;font-size:29.4px;color:#191b23;">5.4K</div>
<div class="t" style="left:1256.5px;top:607px;font-size:29.4px;color:#191b23;">0</div>
<div class="t" style="left:1367.9px;top:607px;font-size:29.4px;color:#191b23;transform:scaleX(1.1100);transform-origin:0 0;">69</div>
<div class="t" style="left:1527.1px;top:607px;font-size:29.4px;color:#191b23;transform:scaleX(0.9722);transform-origin:0 0;">1.64</div>
<div class="t" style="left:1104.4px;top:778px;font-size:29.4px;color:#191b23;">2.9K</div>
<div class="t" style="left:1256.5px;top:778px;font-size:29.4px;color:#191b23;">0</div>
<div class="t" style="left:1367.9px;top:778px;font-size:29.4px;color:#191b23;transform:scaleX(1.1100);transform-origin:0 0;">43</div>
<div class="t" style="left:1527.1px;top:778px;font-size:29.4px;color:#191b23;transform:scaleX(0.9722);transform-origin:0 0;">1.64</div>
<div class="t" style="left:1108.0px;top:907px;font-size:29.4px;color:#191b23;transform:scaleX(0.9397);transform-origin:0 0;">1.6K</div>
<div class="t" style="left:1240.6px;top:907px;font-size:29.4px;color:#191b23;transform:scaleX(1.0333);transform-origin:0 0;">37</div>
<div class="t" style="left:1367.9px;top:907px;font-size:29.4px;color:#191b23;transform:scaleX(1.1100);transform-origin:0 0;">66</div>
<div class="t" style="left:1524.4px;top:907px;font-size:29.4px;color:#191b23;letter-spacing:0.37px;">2.55</div>
<div class="t" style="left:1108.0px;top:1077px;font-size:29.4px;color:#191b23;transform:scaleX(0.9397);transform-origin:0 0;">1.0K</div>
<div class="t" style="left:1240.6px;top:1077px;font-size:29.4px;color:#191b23;transform:scaleX(1.0333);transform-origin:0 0;">37</div>
<div class="t" style="left:1370.0px;top:1077px;font-size:29.4px;color:#191b23;letter-spacing:0.30px;">74</div>
<div class="t" style="left:1524.5px;top:1077px;font-size:29.4px;color:#191b23;letter-spacing:0.33px;">3.59</div>
</div>
<div class="abs" style="left:0;top:1140px;width:1600px;height:49px;background:linear-gradient(180deg,rgba(255,255,255,0) 0,rgba(255,255,255,0.5) 55%,rgba(255,255,255,0.92) 90%,#fff 100%)"></div>
<div class="abs" style="left:1500px;top:0;width:100px;height:1189px;background:linear-gradient(90deg,rgba(255,255,255,0) 8px,rgba(255,255,255,0.25) 30px,rgba(255,255,255,0.52) 50px,rgba(255,255,255,0.82) 70px,#fff 90px)"></div>
<div class="abs" style="left:1543px;top:290px;width:57px;height:56px;border-radius:9px 0 0 9px;background:linear-gradient(90deg,#7aafe4 0px,#7eb3e5 5px,#96c3eb 10px,#afd2f0 18px,#cde8fc 27px,#e4f2fd 38px,#fff 50px)"></div>
<svg style="left:1565.500px;top:309.200px" width="19.300" height="19.300" viewBox="0 0 19.300 19.300"><path d="M9.650 0 V19.300 M0 9.650 H19.300" stroke="#fff" stroke-width="3.800" fill="none"/></svg>
<svg style="left:0;top:0" width="1600" height="1189" viewBox="0 0 1600 1189"><path d="M903.300 361.400 H1017 V1200 H903.300 Z M911.500 370.200 V1200 H1008.900 V370.200 Z" fill="#b880ff" fill-rule="evenodd"/></svg>
</body>
</html>
